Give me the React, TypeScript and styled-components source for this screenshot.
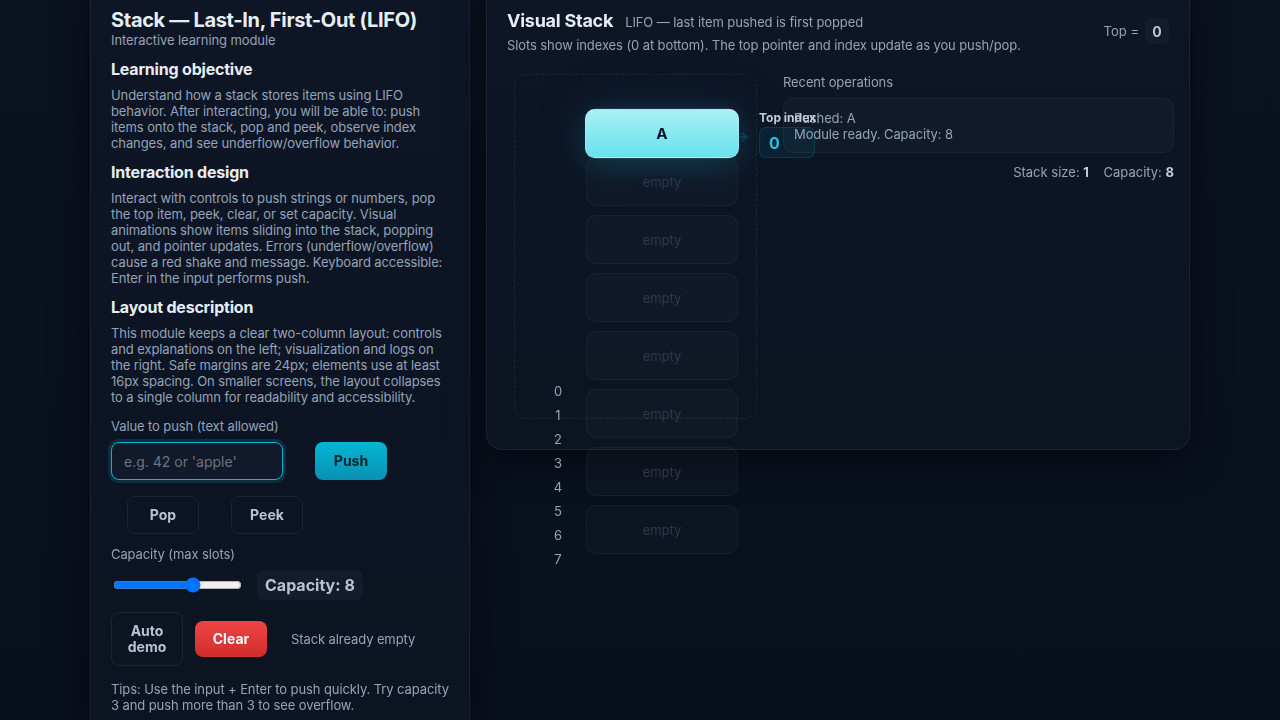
import React from "react";
import styled, { createGlobalStyle } from "styled-components";

const Global = createGlobalStyle`
  html, body { margin: 0; padding: 0; }
  body {
    background: linear-gradient(180deg, #0b1220 0%, #08101d 100%);
    font-family: Inter, "Noto Sans", sans-serif;
    color: #e6edf3;
    overflow: hidden;
  }
  * { box-sizing: border-box; }
`;

const Page = styled.div`
  height: 100vh;
  display: flex;
  align-items: center;
  justify-content: center;
`;

const Layout = styled.div`
  display: grid;
  grid-template-columns: 380px 704px;
  gap: 16px;
  align-items: start;
  flex-shrink: 0;
`;

const Panel = styled.section<{ $pt?: number; $pb?: number }>`
  background: linear-gradient(180deg, #0e1626 0%, #0c1422 100%);
  border: 1px solid rgba(255, 255, 255, 0.06);
  border-radius: 16px;
  padding: ${(p) => p.$pt ?? 20}px 20px ${(p) => p.$pb ?? 20}px 20px;
  box-shadow: 0 10px 40px rgba(0, 0, 0, 0.45);
`;

const Title = styled.h1`
  margin: 0;
  font-size: 20px;
  line-height: 24px;
  font-weight: 700;
  letter-spacing: -0.32px;
  color: #e6edf3;
`;

const Sub = styled.div`
  font-size: 13px;
  line-height: 16px;
  letter-spacing: -0.1px;
  color: #94a3b8;
`;

const Heading = styled.h2`
  margin: 11px 0 8px;
  font-size: 16px;
  line-height: 20px;
  font-weight: 700;
  letter-spacing: -0.2px;
  color: #e6edf3;
`;

const Para = styled.p`
  margin: 0;
  font-size: 13px;
  line-height: 16px;
  letter-spacing: -0.1px;
  color: #94a3b8;
`;

const Label = styled.div<{ $mt: number }>`
  margin-top: ${(p) => p.$mt}px;
  font-size: 13px;
  line-height: 16px;
  letter-spacing: -0.1px;
  color: #94a3b8;
`;

const Row = styled.div<{ $mt: number; $gap: number; $pl?: number }>`
  display: flex;
  align-items: center;
  margin-top: ${(p) => p.$mt}px;
  gap: ${(p) => p.$gap}px;
  padding-left: ${(p) => p.$pl ?? 0}px;
`;

const InputRow = styled(Row)`
  align-items: stretch;
`;

const TextInput = styled.input`
  width: 172px;
  height: 38px;
  border-radius: 8px;
  border: 1px solid #06b6d4;
  background: #111a2a;
  color: #e6edf3;
  padding: 0 12px;
  font-family: Inter, sans-serif;
  font-size: 14px;
  outline: none;
  box-shadow: 0 0 0 3px rgba(6, 182, 212, 0.16);
  &::placeholder { color: #6b7280; }
`;

const Button = styled.button<{ $variant?: "primary" | "danger" | "ghost" }>`
  width: 72px;
  padding: 10px 8px;
  border-radius: 8px;
  font-family: Inter, sans-serif;
  font-size: 14px;
  line-height: 16px;
  font-weight: 700;
  cursor: pointer;
  ${(p) =>
    p.$variant === "primary"
      ? `background: linear-gradient(180deg, #06b6d4 0%, #0891b2 100%); color: #04222b; border: none;`
      : p.$variant === "danger"
      ? `background: linear-gradient(180deg, #ef4444 0%, #d12d2d 100%); color: #ffffff; border: none;`
      : `background: transparent; color: #b8c3d1; border: 1px solid rgba(255,255,255,0.07);`}
`;

const Range = styled.input`
  margin: 2px;
  width: 129px;
`;

const CapBadge = styled.div`
  height: 30px;
  display: flex;
  align-items: center;
  padding: 0 8px;
  border-radius: 8px;
  background: #131c2b;
  font-size: 16px;
  font-weight: 700;
  color: #b8c3d1;
`;

const Status = styled.span`
  margin-left: 12px;
  font-size: 13px;
  letter-spacing: -0.1px;
  color: #94a3b8;
`;

const Tips = styled(Para)`
  margin-top: 15px;
`;

/* Right panel */
const Header = styled.div`
  display: flex;
  justify-content: space-between;
  align-items: flex-start;
`;

const TitleLine = styled.div`
  display: flex;
  align-items: baseline;
  gap: 12px;
  margin-bottom: 4px;
`;

const VTitle = styled.h2`
  margin: 0;
  font-size: 18px;
  line-height: 24px;
  font-weight: 700;
  letter-spacing: -0.25px;
  color: #e6edf3;
`;

const TopWrap = styled.div`
  display: flex;
  align-items: center;
  gap: 6px;
  margin-top: 9px;
  font-size: 13px;
  color: #94a3b8;
`;

const TopBadge = styled.span`
  display: inline-flex;
  align-items: center;
  justify-content: center;
  width: 24px;
  height: 26px;
  border-radius: 6px;
  background: #131c2b;
  color: #b8c3d1;
  font-weight: 700;
  font-size: 14px;
`;

const Body = styled.div`
  display: flex;
  gap: 26px;
  padding-left: 7px;
  margin-top: 21px;
`;

const Stage = styled.div`
  flex: 0 0 243px;
  height: 345px;
  border: 1px dashed rgba(255, 255, 255, 0.07);
  border-radius: 12px;
  padding: 24px 0 0 31px;
  display: flex;
  gap: 16px;
  align-items: flex-start;
`;

const IndexCol = styled.div`
  width: 24px;
  padding-top: 280px;
  display: flex;
  flex-direction: column;
`;

const IndexLabel = styled.div`
  height: 24px;
  line-height: 24px;
  text-align: center;
  font-size: 13px;
  color: #94a3b8;
`;

const Slots = styled.div`
  position: relative;
  width: 152px;
  display: flex;
  flex-direction: column;
  gap: 9px;
  flex-shrink: 0;
`;

const Slot = styled.div<{ $filled?: boolean }>`
  height: 49px;
  border-radius: 10px;
  display: flex;
  align-items: center;
  justify-content: center;
  font-size: 13px;
  ${(p) =>
    p.$filled
      ? `background: linear-gradient(180deg, #a9f0f6 0%, #67e1ec 100%);
         color: #0f172a; font-weight: 700; font-size: 15px;
         border: 1px solid rgba(255,255,255,0.25);
         transform: translateY(10px) scale(1.013);
         box-shadow: 0 6px 28px rgba(34, 211, 238, 0.14), 0 0 44px rgba(20, 60, 90, 0.4);`
      : `background: rgba(255,255,255,0.018);
         border: 1px solid rgba(255,255,255,0.045);
         color: #2e394a;`}
`;

const Pointer = styled.div`
  position: absolute;
  left: calc(100% + 21px);
  top: 13px;
  display: flex;
  flex-direction: column;
  z-index: 2;
`;

const PointerLabel = styled.div`
  font-size: 12px;
  line-height: 12px;
  font-weight: 700;
  color: #c3ccd8;
  white-space: nowrap;
`;

const PointerBadge = styled.div`
  margin-top: 3px;
  width: 56px;
  height: 31px;
  border-radius: 7px;
  background: rgba(6, 182, 212, 0.08);
  border: 1px solid rgba(6, 182, 212, 0.16);
  color: #22c3e0;
  font-weight: 700;
  font-size: 16px;
  display: flex;
  align-items: center;
  padding-left: 9px;
`;

const Arrow = styled.svg`
  position: absolute;
  left: -22px;
  top: 18px;
`;

const LogCol = styled.div`
  flex: 0 0 391px;
  display: flex;
  flex-direction: column;
`;

const LogBox = styled.div`
  margin-top: 8px;
  padding: 11px 10px 10px;
  border-radius: 10px;
  background: #111a29;
  border: 1px solid rgba(255, 255, 255, 0.045);
`;

const LogLine = styled.div`
  font-size: 13px;
  line-height: 16px;
  letter-spacing: -0.1px;
  color: #94a3b8;
`;

const Stats = styled.div`
  margin-top: 11px;
  text-align: right;
  font-size: 13px;
  line-height: 16px;
  color: #94a3b8;
  b { color: #c3ccd8; font-weight: 700; }
`;

export default function App() {
  const empties = Array.from({ length: 7 });
  return (
    <>
      <Global />
      <Page>
        <Layout>
          <Panel $pt={21} $pb={20}>
            <Title>Stack — Last-In, First-Out (LIFO)</Title>
            <Sub>Interactive learning module</Sub>
            <Heading>Learning objective</Heading>
            <Para>
              Understand how a stack stores items using LIFO behavior. After interacting, you will be able to: push
              items onto the stack, pop and peek, observe index changes, and see underflow/overflow behavior.
            </Para>
            <Heading>Interaction design</Heading>
            <Para>
              Interact with controls to push strings or numbers, pop the top item, peek, clear, or set capacity. Visual
              animations show items sliding into the stack, popping out, and pointer updates. Errors (underflow/overflow)
              cause a red shake and message. Keyboard accessible: Enter in the input performs push.
            </Para>
            <Heading>Layout description</Heading>
            <Para>
              This module keeps a clear two-column layout: controls and explanations on the left; visualization and logs
              on the right. Safe margins are 24px; elements use at least 16px spacing. On smaller screens, the layout
              collapses to a single column for readability and accessibility.
            </Para>
            <Label $mt={13}>Value to push (text allowed)</Label>
            <InputRow $mt={8} $gap={32}>
              <TextInput autoFocus placeholder="e.g. 42 or 'apple'" />
              <Button $variant="primary">Push</Button>
            </InputRow>
            <Row $mt={16} $gap={32} $pl={16}>
              <Button>Pop</Button>
              <Button>Peek</Button>
            </Row>
            <Label $mt={12}>Capacity (max slots)</Label>
            <Row $mt={8} $gap={13}>
              <Range type="range" min={1} max={12} defaultValue={8} />
              <CapBadge>Capacity: 8</CapBadge>
            </Row>
            <Row $mt={12} $gap={12}>
              <Button>Auto demo</Button>
              <Button $variant="danger">Clear</Button>
              <Status>Stack already empty</Status>
            </Row>
            <Tips>Tips: Use the input + Enter to push quickly. Try capacity 3 and push more than 3 to see overflow.</Tips>
          </Panel>

          <Panel $pt={22} $pb={30}>
            <Header>
              <div>
                <TitleLine>
                  <VTitle>Visual Stack</VTitle>
                  <Sub>LIFO — last item pushed is first popped</Sub>
                </TitleLine>
                <Sub>Slots show indexes (0 at bottom). The top pointer and index update as you push/pop.</Sub>
              </div>
              <TopWrap>
                Top = <TopBadge>0</TopBadge>
              </TopWrap>
            </Header>
            <Body>
              <Stage>
                <IndexCol>
                  {Array.from({ length: 8 }).map((_, i) => (
                    <IndexLabel key={i}>{i}</IndexLabel>
                  ))}
                </IndexCol>
                <Slots>
                  <Slot $filled>A</Slot>
                  {empties.map((_, i) => (
                    <Slot key={i}>empty</Slot>
                  ))}
                  <Pointer>
                    <Arrow width="12" height="14" viewBox="0 0 12 14">
                      <path d="M0 7 H8 M5 3 L10 7 L5 11" stroke="rgba(34,211,238,0.14)" strokeWidth="2" fill="none" />
                    </Arrow>
                    <PointerLabel>Top index</PointerLabel>
                    <PointerBadge>0</PointerBadge>
                  </Pointer>
                </Slots>
              </Stage>
              <LogCol>
                <Sub>Recent operations</Sub>
                <LogBox>
                  <LogLine>Pushed: A</LogLine>
                  <LogLine>Module ready. Capacity: 8</LogLine>
                </LogBox>
                <Stats>
                  Stack size: <b>1</b>&nbsp;&nbsp;&nbsp; Capacity: <b>8</b>
                </Stats>
              </LogCol>
            </Body>
          </Panel>
        </Layout>
      </Page>
    </>
  );
}
